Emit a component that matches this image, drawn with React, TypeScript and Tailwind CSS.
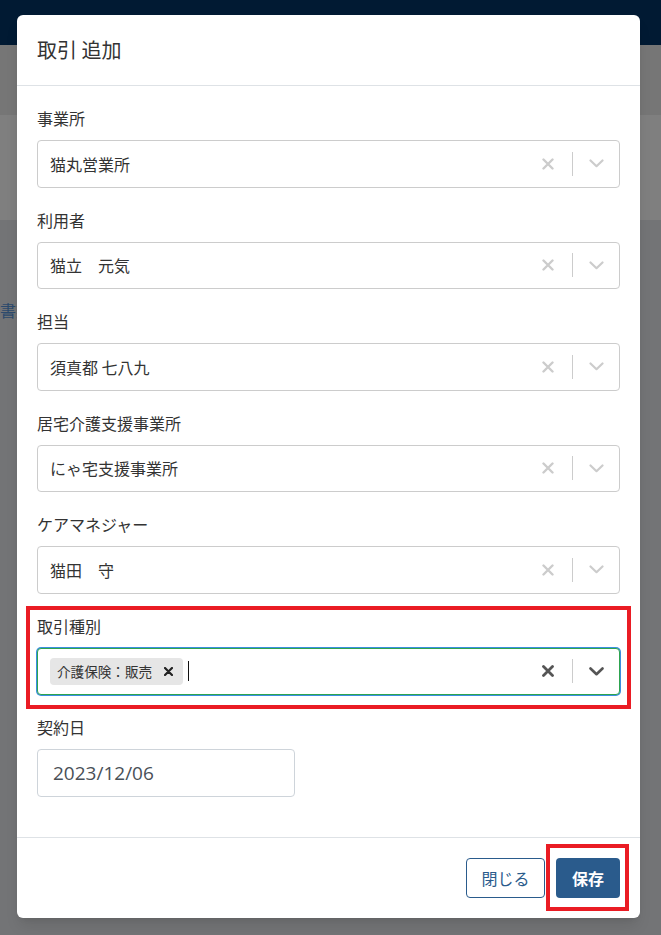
import React from "react";

const JP = { fontFamily: '"Noto Sans CJK JP", "Noto Sans", sans-serif' };

const Cross = ({ color, bold }: { color: string; bold?: boolean }) => (
    <svg width="12" height="12" viewBox="0 0 12 12">
        <path d="M1.5 1.5 L10.5 10.5 M10.5 1.5 L1.5 10.5" stroke={color} strokeWidth={bold ? 2.8 : 2.4} strokeLinecap="round" fill="none" />
    </svg>
);

const Chevron = ({ color, bold }: { color: string; bold?: boolean }) => (
    <svg width="15" height="9" viewBox="0 0 15 9">
        <path d="M1.5 1.5 L7.5 7.2 L13.5 1.5" stroke={color} strokeWidth={bold ? 2.6 : 2.2} strokeLinecap="round" strokeLinejoin="round" fill="none" />
    </svg>
);

const SelectBox = ({ value }: { value: string }) => (
    <div className="flex h-[47.5px] items-center rounded border border-[#cccccc] bg-white">
        <div className="flex-1 pl-[12px] text-[16px] text-[#333333]">{value}</div>
        <div className="flex w-[48px] justify-center"><Cross color="#cccccc" /></div>
        <div className="h-[24px] w-px bg-[#cccccc]" />
        <div className="flex w-[46px] justify-center"><Chevron color="#cccccc" /></div>
    </div>
);

const fields = [
    { label: "事業所", value: "猫丸営業所" },
    { label: "利用者", value: "猫立　元気" },
    { label: "担当", value: "須真都 七八九" },
    { label: "居宅介護支援事業所", value: "にゃ宅支援事業所" },
    { label: "ケアマネジャー", value: "猫田　守" },
];

const App = () => {
    return (
        <div className="relative h-[935px] w-[661px] overflow-hidden bg-[#737476]" style={JP}>
            {/* page behind the overlay */}
            <div className="h-[45px] bg-[#011a33]" />
            <div className="h-[70px] bg-[#767676]" />
            <div className="h-[105px] bg-[#7f7f7f]" />
            <div className="mt-[78px] h-6 text-[16px] leading-6 text-[#2c4a6d]">書類</div>

            <div className="absolute left-[17px] top-[15px] w-[623px] rounded-md bg-white shadow-lg">
                <div className="flex h-[71px] items-center border-b border-[#dee2e6] px-5">
                    <h1 className="text-[20px] leading-none text-[#333333]">取引 追加</h1>
                </div>

                <div className="px-5 pt-5 pb-5">
                    {fields.map((f) => (
                        <div key={f.label} className="mb-5">
                            <div className="mb-[10px] h-6 text-[16px] leading-6 text-[#333333]">{f.label}</div>
                            <SelectBox value={f.value} />
                        </div>
                    ))}

                    <div className="relative mb-5">
                        <div className="mb-[10px] h-6 text-[16px] leading-6 text-[#333333]">取引種別</div>
                        <div className="flex h-[47.5px] items-center rounded border border-[#2ea44f] bg-white shadow-[0_0_0_1px_#3b8fe0]">
                            <div className="flex flex-1 items-center pl-[12px]">
                                <div className="flex h-[27px] items-center rounded-sm bg-[#e6e6e6] pl-[7px] pr-[10px]">
                                    <span className="text-[13.6px] text-[#333333]">介護保険：販売</span>
                                    <span className="ml-[12px]"><svg width="9" height="9" viewBox="0 0 9 9"><path d="M1 1 L8 8 M8 1 L1 8" stroke="#222222" strokeWidth="2.2" strokeLinecap="round" /></svg></span>
                                </div>
                                <div className="ml-[5px] h-[20px] w-px bg-[#111111]" />
                            </div>
                            <div className="flex w-[48px] justify-center"><Cross color="#555555" bold /></div>
                            <div className="h-[24px] w-px bg-[#cccccc]" />
                            <div className="flex w-[46px] justify-center"><Chevron color="#555555" bold /></div>
                        </div>
                        <div className="pointer-events-none absolute -left-[11px] -right-[11px] -top-[8px] -bottom-[14px] border-4 border-[#ea1c24]" />
                    </div>

                    <div className="mb-5">
                        <div className="mb-[10px] h-6 text-[16px] leading-6 text-[#333333]">契約日</div>
                        <div className="flex h-[48px] w-[258px] items-center rounded border border-[#ced4da] pl-[15px] text-[19px] text-[#495057]" style={{ fontFamily: '"Open Sans", sans-serif' }}>
                            2023/12/06
                        </div>
                    </div>
                </div>

                <div className="flex justify-end gap-[11px] border-t border-[#dee2e6] px-5 py-5">
                    <button className="h-[40px] w-[79px] rounded border border-[#2a5b8c] bg-white text-[16px] text-[#2a5b8c]">閉じる</button>
                    <div className="relative">
                        <button className="h-[40px] w-[64px] rounded bg-[#2a5b8c] text-[16px] font-bold text-white">保存</button>
                        <div className="pointer-events-none absolute -left-[10px] -right-[9px] -top-[14px] -bottom-[13px] border-4 border-[#ea1c24]" />
                    </div>
                </div>
            </div>
        </div>
    );
};

export default App;
